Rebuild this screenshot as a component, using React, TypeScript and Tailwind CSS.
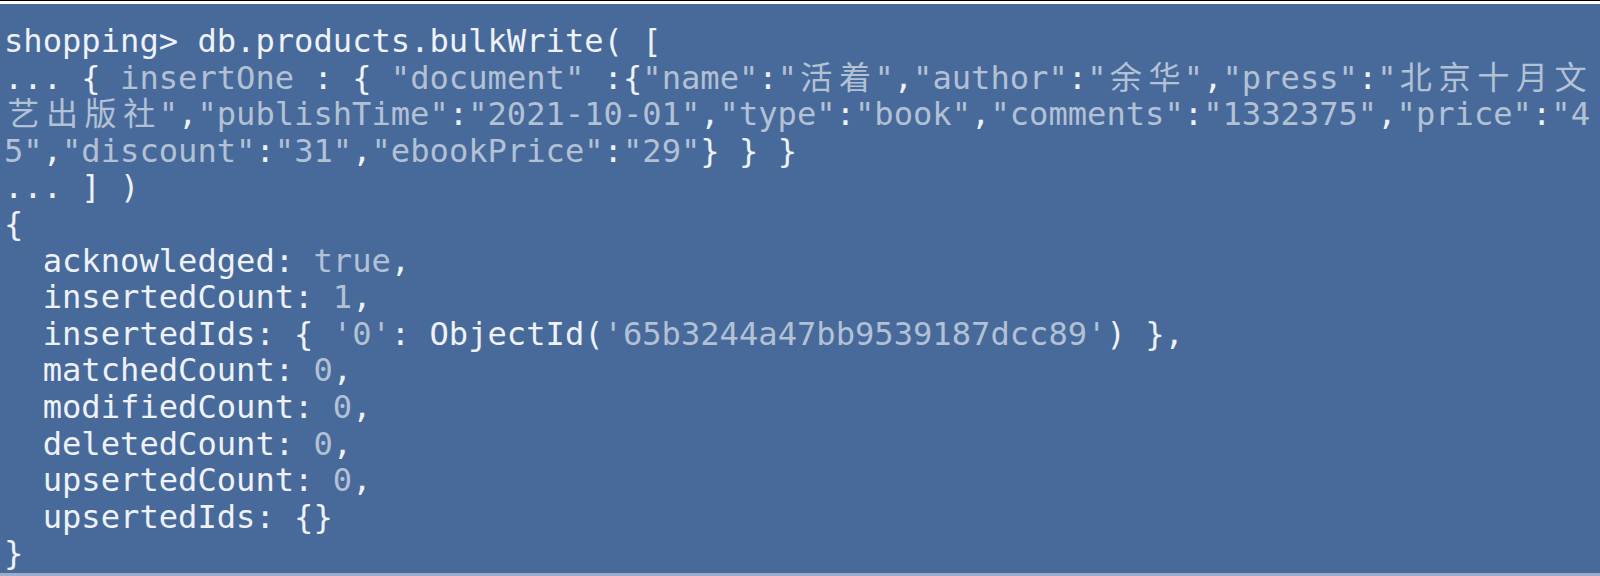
import React from 'react';

// mongosh echo: punctuation bright, words dim
const BRIGHT = '.{}:,()[]';
const CJK = /[\u4e00-\u9fff]/;

type Seg = [string, boolean];

const tokenize = (s: string): Seg[] => {
  const out: Seg[] = [];
  for (const ch of s) {
    const bright = BRIGHT.includes(ch) || ch === ' ';
    const last = out[out.length - 1];
    if (last && last[1] === bright && !CJK.test(ch) && !CJK.test(last[0].slice(-1))) {
      last[0] += ch;
    } else {
      out.push([ch, bright]);
    }
  }
  return out;
};

const Text = ({ text, bright }: { text: string; bright: boolean }) => {
  const color = bright ? 'text-[#eef2f8]' : 'text-[#b3c1d5]';
  if (CJK.test(text)) {
    return <span className={`inline-block w-[2ch] text-center ${color}`}>{text}</span>;
  }
  return <span className={color}>{text}</span>;
};

const Line = ({ segs }: { segs: Seg[] }) => (
  <div className="h-[36.6px] whitespace-pre">
    {segs.map(([t, b], i) => (
      <Text key={i} text={t} bright={b} />
    ))}
  </div>
);

const W = (t: string): Seg => [t, true];
const G = (t: string): Seg => [t, false];

const input: Seg[][] = [
  [W('shopping> db.products.bulkWrite( [')],
  tokenize('... { insertOne : { "document" :{"name":"活着","author":"余华","press":"北京十月文'),
  tokenize('艺出版社","publishTime":"2021-10-01","type":"book","comments":"1332375","price":"4'),
  tokenize('5","discount":"31","ebookPrice":"29"} } }'),
  tokenize('... ] )'),
];

const output: Seg[][] = [
  [W('{')],
  [W('  acknowledged: '), G('true'), W(',')],
  [W('  insertedCount: '), G('1'), W(',')],
  [W('  insertedIds: { '), G("'0'"), W(': ObjectId('), G("'65b3244a47bb9539187dcc89'"), W(') },')],
  [W('  matchedCount: '), G('0'), W(',')],
  [W('  modifiedCount: '), G('0'), W(',')],
  [W('  deletedCount: '), G('0'), W(',')],
  [W('  upsertedCount: '), G('0'), W(',')],
  [W('  upsertedIds: {}')],
  [W('}')],
];

export default function App() {
  return (
    <div className="w-[1600px] h-[576px] overflow-hidden border-t border-black">
      <div className="h-full border-t-[3px] border-white border-b-[3px] border-b-[#9aadc9] bg-[#476a9b] pl-[4px] pt-[19px] font-['DejaVu_Sans_Mono','Noto_Sans_CJK_SC',monospace] text-[32.14px] leading-[36.6px]">
        {[...input, ...output].map((segs, i) => (
          <Line key={i} segs={segs} />
        ))}
      </div>
    </div>
  );
}
